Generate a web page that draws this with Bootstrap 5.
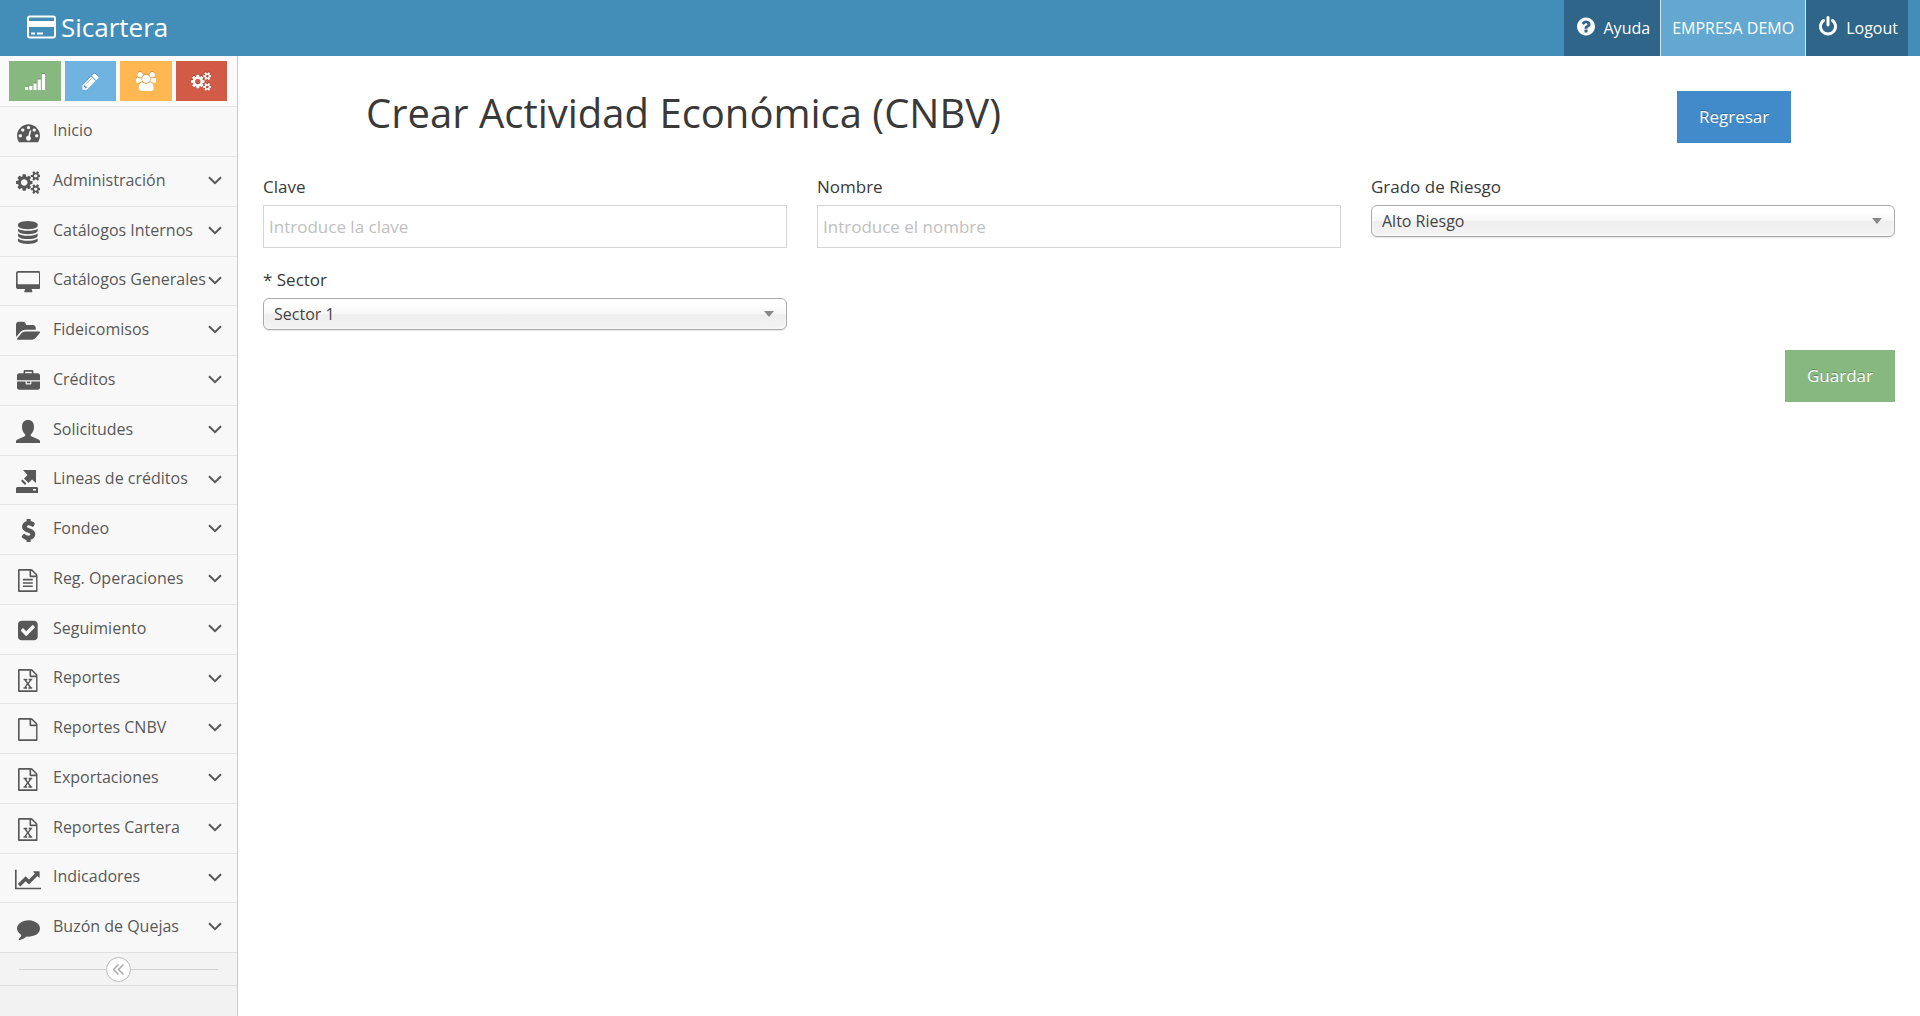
<!DOCTYPE html>
<html lang="es">
<head>
<meta charset="utf-8">
<meta name="viewport" content="width=device-width, initial-scale=1">
<title>Sicartera</title>
<link href="https://cdn.jsdelivr.net/npm/bootstrap@5.3.0/dist/css/bootstrap.min.css" rel="stylesheet">
<style>
body{font-family:"Open Sans","Noto Sans",sans-serif;font-size:16px;color:#393939;line-height:24px}
.ico{height:23px;width:auto;fill:currentColor;display:block}
.topbar{background:#438eb9;height:56px;color:#fff}
.brand-link{font-size:26px;gap:5px;padding:0 0 2px 27px}
.brand-link .ico{width:29px;height:24px}
.user-nav{margin-right:12px}
.user-nav a{color:#fff;padding:0 10px 0 13px;gap:9px;background:#2e6589}
.user-nav a.company{background:#62a8d1;border:solid #d5e5ef;border-width:0 1px;padding:0 11px}
.user-nav .ico{height:21px;margin-bottom:3px}
.sidebar{width:238px;background:#f2f2f2;border-right:1px solid #ccc}
.shortcuts{background:#fafafa;padding:5px 10px 5px 9px;gap:4px;height:50px}
.shortcuts button{flex:1 1 0;height:40px;border:0;color:#fff;padding:0}
.shortcuts .ico{height:19px;filter:drop-shadow(0 -1px 0 rgba(0,0,0,.2))}
.sc-green{background:#87b87f}
.sc-blue{background:#6fb3e0}
.sc-orange{background:#ffb752}
.sc-red{background:#d15b47}
.side-menu li{height:50px;background:#f8f8f8;border-top:1px solid #e5e5e5}
.side-menu li:nth-child(4n){height:49px}
.side-menu a{color:#585858;height:100%;padding:0 15px 0 9px}
.side-menu .slot{width:38px;flex:none;padding-top:2px}
.side-menu .ico{margin:0 auto}
.side-menu .label-txt{margin-left:6px;white-space:nowrap;flex:1 1 0;min-width:0;padding-bottom:4px}
.side-menu .chev{width:14px;height:9px;fill:none;stroke:currentColor;stroke-width:2;flex:none;margin-bottom:2px}
.collapse-row{height:34px;border:solid #e0e0e0;border-width:1px 0;background:#f3f3f3;padding:0 19px}
.collapse-row hr{flex:1;margin:0;border-color:#d0d0d0;opacity:1}
.collapse-row button{width:25px;height:25px;border:1px solid #bbb;background:#fff;color:#aaa;padding:0}
.main-area{padding:35px 25px 0}
.title-row{margin-bottom:32px}
.main-area h1{font-size:40px;line-height:44px;font-weight:400;margin:0 0 0 103px}
.btn-ace{height:52px;border:0;color:#fff;font-size:17px;padding:0 22px;text-shadow:0 -1px 0 rgba(0,0,0,.25)}
.btn-back{background:#428bca;margin-right:104px;width:114px}
.btn-save{background:#87b87f;width:110px}
.row{--bs-gutter-x:30px}
.form-line{margin-top:20px}
.field-label{font-size:17px;margin-bottom:6px;display:block}
.text-in{height:43px;border:1px solid #d5d5d5;width:100%;padding:0 5px;font-size:17px}
.text-in::placeholder{color:#c0c0c0;opacity:1}
.sel{position:relative}
.sel select{appearance:none;width:100%;height:32px;border:1px solid #aaa;border-radius:6px;padding:0 10px;font-size:16px;color:#444;background:linear-gradient(#fff 20%,#f6f6f6 50%,#eee 52%,#f4f4f4 100%);box-shadow:0 0 3px #fff inset,0 1px 1px rgba(0,0,0,.1)}
.sel::after{content:"";position:absolute;right:13px;top:13px;border:5px solid transparent;border-top:6px solid #888;border-bottom:0}
</style>
</head>
<body class="d-flex flex-column min-vh-100">
<svg class="d-none">
<symbol id="sheet" viewBox="128 0 1536 1792"><path d="M1596 380q28 28 48 76t20 88v1152q0 40-28 68t-68 28h-1344q-40 0-68-28t-28-68v-1600q0-40 28-68t68-28h896q40 0 88 20t76 48zm-444-244v376h376q-10-29-22-41l-313-313q-12-12-41-22zm384 1528v-1024h-416q-40 0-68-28t-28-68v-416h-768v1536h1280z"/></symbol>
<symbol id="excel" viewBox="128 0 1536 1792"><path d="M1596 380q28 28 48 76t20 88v1152q0 40-28 68t-68 28h-1344q-40 0-68-28t-28-68v-1600q0-40 28-68t68-28h896q40 0 88 20t76 48zm-444-244v376h376q-10-29-22-41l-313-313q-12-12-41-22zm384 1528v-1024h-416q-40 0-68-28t-28-68v-416h-768v1536h1280zm-979-234v106h281v-106h-75l103-161q5-7 10-16.5t7.5-13.5 3.5-4h2q1 4 5 10 2 4 4.5 7.5t6 8 6.5 8.5l107 161h-76v106h291v-106h-68l-192-273 195-282h67v-107h-279v107h74l-103 159q-4 7-10 16.5t-9 13.5l-2 3h-2q-1-4-5-10-6-11-17-23l-106-159h76v-107h-290v107h68l189 272-194 283h-68z"/></symbol>
<symbol id="cogs" viewBox="-64 0 1920 1792"><path d="M832 896q0-106-75-181t-181-75-181 75-75 181 75 181 181 75 181-75 75-181zm768 512q0-52-38-90t-90-38-90 38-38 90q0 53 37.5 90.5t90.5 37.5 90.5-37.5 37.5-90.5zm0-1024q0-52-38-90t-90-38-90 38-38 90q0 53 37.5 90.5t90.5 37.5 90.5-37.5 37.5-90.5zm-384 421v185q0 10-7 19.5t-16 10.5l-155 24q-11 35-32 76 34 48 90 115 7 11 7 20 0 12-7 19-23 30-82.5 89.5t-78.5 59.5q-11 0-21-7l-115-90q-37 19-77 31-11 108-23 155-7 24-30 24h-186q-11 0-20-7.5t-10-17.5l-23-153q-34-10-75-31l-118 89q-7 7-20 7-11 0-21-8-144-133-144-160 0-9 7-19 10-14 41-53t47-61q-23-44-35-82l-152-24q-10-1-17-9.5t-7-19.5v-185q0-10 7-19.5t16-10.5l155-24q11-35 32-76-34-48-90-115-7-11-7-20 0-12 7-20 22-30 82-89t79-59q11 0 21 7l115 90q34-18 77-32 11-108 23-154 7-24 30-24h186q11 0 20 7.5t10 17.5l23 153q34 10 75 31l118-89q8-7 20-7 11 0 21 8 144 133 144 160 0 8-7 19-12 16-42 54t-45 60q23 48 34 82l152 23q10 2 17 10.5t7 19.5zm640 533v140q0 16-149 31-12 27-30 52 51 113 51 138 0 4-4 7-122 71-124 71-8 0-46-47t-52-68q-20 2-30 2t-30-2q-14 21-52 68t-46 47q-2 0-124-71-4-3-4-7 0-25 51-138-18-25-30-52-149-15-149-31v-140q0-16 149-31 13-29 30-52-51-113-51-138 0-4 4-7 4-2 35-20t59-34 30-16q8 0 46 46.5t52 67.5q20-2 30-2t30 2q51-71 92-112l6-2q4 0 124 70 4 3 4 7 0 25-51 138 17 23 30 52 149 15 149 31zm0-1024v140q0 16-149 31-12 27-30 52 51 113 51 138 0 4-4 7-122 71-124 71-8 0-46-47t-52-68q-20 2-30 2t-30-2q-14 21-52 68t-46 47q-2 0-124-71-4-3-4-7 0-25 51-138-18-25-30-52-149-15-149-31v-140q0-16 149-31 13-29 30-52-51-113-51-138 0-4 4-7 4-2 35-20t59-34 30-16q8 0 46 46.5t52 67.5q20-2 30-2t30 2q51-71 92-112l6-2q4 0 124 70 4 3 4 7 0 25-51 138 17 23 30 52 149 15 149 31z"/></symbol>
<symbol id="down" viewBox="0 0 14 9"><path d="M1 1.2l6 6 6-6"/></symbol>
</svg>

<header class="topbar d-flex justify-content-between">
  <a href="#" class="brand-link d-flex align-items-center text-white text-decoration-none">
    <svg class="ico" viewBox="0 0 29 24"><path fill-rule="evenodd" d="M3 .5h23a3 3 0 0 1 3 3v17a3 3 0 0 1-3 3H3a3 3 0 0 1-3-3v-17a3 3 0 0 1 3-3zM2 3.500V6h25V3.500q0-1-1-1H3q-1 0-1 1zM2 12v8.500q0 1 1 1h23q1 0 1-1V12zM4 17.500h4v2H4zM10 17.500h6v2h-6z"/></svg>
    <span>Sicartera</span>
  </a>
  <nav class="user-nav d-flex">
    <a href="#" class="d-flex align-items-center text-decoration-none"><svg class="ico" viewBox="128 0 1536 1792"><path d="M1024 1376v-192q0-14-9-23t-23-9h-192q-14 0-23 9t-9 23v192q0 14 9 23t23 9h192q14 0 23-9t9-23zm256-672q0-88-55.500-163t-138.500-116-170-41q-243 0-371 213-15 24 8 42l132 100q7 6 19 6 16 0 25-12 53-68 86-92 34-24 86-24 48 0 85.500 26t37.500 59q0 38-20 61t-68 45q-63 28-115.500 86.500t-52.500 125.500v36q0 14 9 23t23 9h192q14 0 23-9t9-23q0-19 21.500-49.500t54.500-49.500q32-18 49-28.500t46-35 44.500-48 28-60.500 12.500-81zm384 192q0 209-103 385.500t-279.500 279.500-385.500 103-385.500-103-279.500-279.500-103-385.500 103-385.500 279.500-279.500 385.500-103 385.500 103 279.500 279.500 103 385.500z"/></svg>Ayuda</a>
    <a href="#" class="company d-flex align-items-center text-decoration-none">EMPRESA DEMO</a>
    <a href="#" class="d-flex align-items-center text-decoration-none"><svg class="ico" viewBox="128 0 1536 1792"><path d="M1664 896q0 156-61 298t-164 245-245 164-298 61-298-61-245-164-164-245-61-298q0-182 80.500-343t226.500-270q43-32 95.500-25t83.500 50q32 42 24.500 94.500t-49.500 84.500q-98 74-151.500 181t-53.500 228q0 104 40.500 198.500t109.500 163.500 163.500 109.500 198.500 40.500 198.500-40.500 163.500-109.500 109.500-163.500 40.500-198.500q0-121-53.500-228t-151.500-181q-42-32-49.500-84.500t24.500-94.500q31-43 84-50t95 25q146 109 226.500 270t80.500 343zm-640-768v640q0 52-38 90t-90 38-90-38-38-90v-640q0-52 38-90t90-38 90 38 38 90z"/></svg>Logout</a>
  </nav>
</header>

<div class="d-flex flex-grow-1">
  <aside class="sidebar flex-shrink-0">
    <div class="shortcuts d-flex">
      <button type="button" aria-label="Estadísticas" class="sc-green d-flex align-items-center justify-content-center"><svg class="ico" viewBox="0 0 19 18"><path d="M0 14h3v3H0zM4 13h3v4H4zM8 11h3v6H8zM12 7h3v10h-3zM16 2h3v15h-3z"/></svg></button>
      <button type="button" aria-label="Editar" class="sc-blue d-flex align-items-center justify-content-center"><svg class="ico" viewBox="0 0 1792 1792"><path d="M491 1536l91-91-235-235-91 91v107h128v128h107zm523-928q0-22-22-22-10 0-17 7l-542 542q-7 7-7 17 0 22 22 22 10 0 17-7l542-542q7-7 7-17zm-54-192l416 416-832 832h-416v-416zm683 96q0 53-37 90l-166 166-416-416 166-165q36-38 90-38 53 0 91 38l235 234q37 39 37 91z"/></svg></button>
      <button type="button" aria-label="Usuarios" class="sc-orange d-flex align-items-center justify-content-center"><svg class="ico" viewBox="-64 0 1920 1792"><path d="M529 896q-162 5-265 128h-134q-82 0-138-40.500t-56-118.500q0-353 124-353 6 0 43.500 21t97.500 42.500 119 21.500q67 0 133-23-5 37-5 66 0 139 81 256zm1071 637q0 120-73 189.500t-194 69.500h-874q-121 0-194-69.500t-73-189.500q0-53 3.500-103.500t14-109 26.500-108.500 43-97.500 62-81 85.500-53.500 111.500-20q10 0 43 21.500t73 48 107 48 135 21.500 135-21.500 107-48 73-48 43-21.500q61 0 111.500 20t85.500 53.500 62 81 43 97.500 26.500 108.500 14 109 3.500 103.500zm-1024-1277q0 106-75 181t-181 75-181-75-75-181 75-181 181-75 181 75 75 181zm704 384q0 159-112.500 271.500t-271.500 112.500-271.500-112.500-112.500-271.500 112.500-271.500 271.500-112.500 271.500 112.500 112.500 271.500zm576 225q0 78-56 118.500t-138 40.500h-134q-103-123-265-128 81-117 81-256 0-29-5-66 66 23 133 23 59 0 119-21.500t97.500-42.500 43.500-21q124 0 124 353zm-128-609q0 106-75 181t-181 75-181-75-75-181 75-181 181-75 181 75 75 181z"/></svg></button>
      <button type="button" aria-label="Configuración" class="sc-red d-flex align-items-center justify-content-center"><svg class="ico" viewBox="-64 0 1920 1792"><use href="#cogs" x="-64" width="1920" height="1792"/></svg></button>
    </div>
    <ul class="side-menu list-unstyled m-0">
      <li><a href="#" class="d-flex align-items-center text-decoration-none"><span class="slot"><svg class="ico" viewBox="0 0 1792 1792"><path d="M384 1152q0-53-37.500-90.500t-90.500-37.500-90.500 37.500-37.500 90.500 37.500 90.500 90.500 37.500 90.500-37.500 37.500-90.500zm192-448q0-53-37.500-90.500t-90.500-37.500-90.500 37.500-37.500 90.500 37.500 90.500 90.500 37.500 90.500-37.500 37.500-90.500zm428 481l101-382q6-26-7.500-48.500t-38.500-29.500-48 6.500-30 39.500l-101 382q-60 5-107 43.500t-63 98.500q-20 77 20 146t117 89 146-20 89-117q16-60-6-117t-72-91zm660-33q0-53-37.500-90.500t-90.500-37.500-90.500 37.500-37.500 90.500 37.500 90.500 90.500 37.500 90.500-37.500 37.500-90.500zm-640-640q0-53-37.500-90.500t-90.500-37.500-90.500 37.500-37.500 90.500 37.500 90.500 90.500 37.500 90.500-37.500 37.500-90.500zm448 192q0-53-37.500-90.500t-90.500-37.500-90.500 37.500-37.500 90.500 37.500 90.500 90.500 37.500 90.500-37.500 37.500-90.500zm320 448q0 261-141 483-19 29-54 29h-1402q-35 0-54-29-141-221-141-483 0-182 71-348t191-286 286-191 348-71 348 71 286 191 191 286 71 348z"/></svg></span><span class="label-txt">Inicio</span></a></li>
      <li><a href="#" class="d-flex align-items-center text-decoration-none"><span class="slot"><svg class="ico" viewBox="-64 0 1920 1792"><use href="#cogs" x="-64" width="1920" height="1792"/></svg></span><span class="label-txt">Administración</span><svg class="chev"><use href="#down"/></svg></a></li>
      <li><a href="#" class="d-flex align-items-center text-decoration-none"><span class="slot"><svg class="ico" viewBox="128 0 1536 1792"><path d="M896 768q237 0 443-43t325-127v170q0 69-103 128t-280 93.500-385 34.500-385-34.500-280-93.500-103-128v-170q119 84 325 127t443 43zm0 768q237 0 443-43t325-127v170q0 69-103 128t-280 93.500-385 34.500-385-34.500-280-93.500-103-128v-170q119 84 325 127t443 43zm0-384q237 0 443-43t325-127v170q0 69-103 128t-280 93.500-385 34.500-385-34.500-280-93.500-103-128v-170q119 84 325 127t443 43zm0-1152q208 0 385 34.500t280 93.500 103 128v128q0 69-103 128t-280 93.500-385 34.500-385-34.500-280-93.500-103-128v-128q0-69 103-128t280-93.500 385-34.500z"/></svg></span><span class="label-txt">Catálogos Internos</span><svg class="chev"><use href="#down"/></svg></a></li>
      <li><a href="#" class="d-flex align-items-center text-decoration-none"><span class="slot"><svg class="ico" viewBox="-64 0 1920 1792"><path d="M1728 992v-832q0-13-9.500-22.500t-22.500-9.500h-1600q-13 0-22.500 9.500t-9.500 22.500v832q0 13 9.500 22.500t22.500 9.500h1600q13 0 22.500-9.500t9.500-22.500zm128-832v1088q0 66-47 113t-113 47h-544q0 37 16 77.500t32 71 16 43.500q0 26-19 45t-45 19h-512q-26 0-45-19t-19-45q0-14 16-44t32-70 16-78h-544q-66 0-113-47t-47-113v-1088q0-66 47-113t113-47h1600q66 0 113 47t47 113z"/></svg></span><span class="label-txt">Catálogos Generales</span><svg class="chev"><use href="#down"/></svg></a></li>
      <li><a href="#" class="d-flex align-items-center text-decoration-none"><span class="slot"><svg class="ico" viewBox="64 0 1920 1792"><path d="M1943 952q0 31-31 66l-336 396q-43 51-120.500 86.500t-143.500 35.500h-1088q-34 0-60.500-13t-26.500-43q0-31 31-66l336-396q43-51 120.500-86.500t143.500-35.500h1088q34 0 60.500 13t26.500 43zm-343-344v160h-832q-94 0-197 47.500t-164 119.500l-337 396-5 6q0-4-.5-12.500t-.5-12.500v-960q0-92 66-158t158-66h320q92 0 158 66t66 158v32h544q92 0 158 66t66 158z"/></svg></span><span class="label-txt">Fideicomisos</span><svg class="chev"><use href="#down"/></svg></a></li>
      <li><a href="#" class="d-flex align-items-center text-decoration-none"><span class="slot"><svg class="ico" viewBox="0 0 1792 1792"><path d="M640 256h512v-128h-512v128zm1152 640v480q0 66-47 113t-113 47h-1472q-66 0-113-47t-47-113v-480h672v160q0 26 19 45t45 19h320q26 0 45-19t19-45v-160h672zm-768 0v128h-256v-128h256zm768-480v384h-1792v-384q0-66 47-113t113-47h352v-160q0-40 28-68t68-28h576q40 0 68 28t28 68v160h352q66 0 113 47t47 113z"/></svg></span><span class="label-txt">Créditos</span><svg class="chev"><use href="#down"/></svg></a></li>
      <li><a href="#" class="d-flex align-items-center text-decoration-none"><span class="slot"><svg class="ico" viewBox="0 0 24 23"><path d="M12 0C8.200 0 6 2.600 6 7c0 3 1.200 5.600 2.800 7 .9.800.7 1.900-.6 2.500L2 19.200C.7 19.800 0 20.400 0 21.500V23h24v-1.500c0-1.100-.7-1.700-2-2.300l-6.200-2.700c-1.300-.6-1.500-1.700-.6-2.500C16.800 12.600 18 10 18 7c0-4.400-2.200-7-6-7z"/></svg></span><span class="label-txt">Solicitudes</span><svg class="chev"><use href="#down"/></svg></a></li>
      <li><a href="#" class="d-flex align-items-center text-decoration-none"><span class="slot"><svg class="ico" viewBox="0 0 24 23"><path fill-rule="evenodd" d="M7 0h13v13l-4-3.500-3.500 3.500-4.500-4.500L11.500 5zM6.500 9.500l4 4L9 15l-4-4zM1 17h20l1 1v5H0v-5zM17 19v1.500h3V19z"/></svg></span><span class="label-txt">Lineas de créditos</span><svg class="chev"><use href="#down"/></svg></a></li>
      <li><a href="#" class="d-flex align-items-center text-decoration-none"><span class="slot"><svg class="ico" viewBox="0 0 1792 1792"><path stroke="currentColor" stroke-width="120" d="M1362 1185q0 153-99.500 263.500t-258.500 136.500v175q0 14-9 23t-23 9h-135q-13 0-22.500-9.500t-9.500-22.500v-175q-66-9-127.500-31t-101.500-44.500-74-48-46.500-37.500-17.500-18q-17-21-2-41l103-135q7-10 23-12 15-2 24 9l2 2q113 99 243 125 37 8 74 8 81 0 142.500-43t61.500-122q0-28-15-53t-33.500-42-58.500-37.500-66-32-80-32.500q-39-16-61.500-25t-61.500-26.500-62.500-31-56.500-35.500-53.500-42.500-43.500-49-35.500-58-21-66.500-8.500-78q0-138 98-242t255-134v-180q0-13 9.500-22.500t22.500-9.500h135q14 0 23 9t9 23v176q57 6 110.500 23t87 33.500 63.500 37.500 39 29 15 14q17 18 5 38l-81 146q-8 15-23 16-14 3-27-7-3-3-14.500-12t-39-26.500-58.500-32-74.500-26-85.500-11.500q-95 0-155 43t-60 111q0 26 8.500 48t29.500 41.500 39.500 33 56 31 60.500 27 70 27.500q53 20 81 31.500t76 35 75.500 42.500 62 50 53 63.500 31.500 76.500 13 94z"/></svg></span><span class="label-txt">Fondeo</span><svg class="chev"><use href="#down"/></svg></a></li>
      <li><a href="#" class="d-flex align-items-center text-decoration-none"><span class="slot"><svg class="ico" viewBox="128 0 1536 1792"><use href="#sheet" x="128" width="1536" height="1792"/><path d="M512 768h768v128H512zM512 1024h768v128H512zM512 1280h768v128H512z"/></svg></span><span class="label-txt">Reg. Operaciones</span><svg class="chev"><use href="#down"/></svg></a></li>
      <li><a href="#" class="d-flex align-items-center text-decoration-none"><span class="slot"><svg class="ico" viewBox="128 0 1536 1792"><path d="M813 1299l614-614q19-19 19-45t-19-45l-102-102q-19-19-45-19t-45 19l-467 467-211-211q-19-19-45-19t-45 19l-102 102q-19 19-19 45t19 45l358 358q19 19 45 19t45-19zm851-883v960q0 119-84.500 203.500t-203.500 84.500h-960q-119 0-203.500-84.500t-84.500-203.500v-960q0-119 84.500-203.500t203.500-84.500h960q119 0 203.500 84.500t84.500 203.500z"/></svg></span><span class="label-txt">Seguimiento</span><svg class="chev"><use href="#down"/></svg></a></li>
      <li><a href="#" class="d-flex align-items-center text-decoration-none"><span class="slot"><svg class="ico" viewBox="0 0 1536 1792"><use href="#excel" width="1536" height="1792"/></svg></span><span class="label-txt">Reportes</span><svg class="chev"><use href="#down"/></svg></a></li>
      <li><a href="#" class="d-flex align-items-center text-decoration-none"><span class="slot"><svg class="ico" viewBox="0 0 1536 1792"><use href="#sheet" width="1536" height="1792"/></svg></span><span class="label-txt">Reportes CNBV</span><svg class="chev"><use href="#down"/></svg></a></li>
      <li><a href="#" class="d-flex align-items-center text-decoration-none"><span class="slot"><svg class="ico" viewBox="0 0 1536 1792"><use href="#excel" width="1536" height="1792"/></svg></span><span class="label-txt">Exportaciones</span><svg class="chev"><use href="#down"/></svg></a></li>
      <li><a href="#" class="d-flex align-items-center text-decoration-none"><span class="slot"><svg class="ico" viewBox="0 0 1536 1792"><use href="#excel" width="1536" height="1792"/></svg></span><span class="label-txt">Reportes Cartera</span><svg class="chev"><use href="#down"/></svg></a></li>
      <li><a href="#" class="d-flex align-items-center text-decoration-none"><span class="slot"><svg class="ico" viewBox="0 0 2048 1792"><path d="M2048 1536v128h-2048v-1536h128v1408h1920zm-128-1248v435q0 21-19.500 29.500t-35.500-7.500l-121-121-633 633q-10 10-23 10t-23-10l-233-233-416 416-192-192 585-585q10-10 23-10t23 10l233 233 464-464-121-121q-16-16-7.500-35.500t29.500-19.500h435q14 0 23 9t9 23z"/></svg></span><span class="label-txt">Indicadores</span><svg class="chev"><use href="#down"/></svg></a></li>
      <li><a href="#" class="d-flex align-items-center text-decoration-none"><span class="slot"><svg class="ico" viewBox="0 0 1792 1792"><path d="M1792 896q0 174-120 321.500t-326 233-450 85.500q-70 0-145-8-198 175-460 242-49 14-114 22-17 2-30.500-9t-17.500-29v-1q-3-4-.5-12t2-10 4.500-9.500l6-9 7-8.500 8-9q7-8 31-34.500t34.500-38 31-39.500 32.500-51 27-59 26-76q-157-89-247.500-220t-90.500-281q0-130 71-248.500t191-204.500 286-136.500 348-50.500q244 0 450 85.500t326 233 120 321.500z"/></svg></span><span class="label-txt">Buzón de Quejas</span><svg class="chev"><use href="#down"/></svg></a></li>
    </ul>
    <div class="collapse-row d-flex align-items-center">
      <hr><button type="button" aria-label="Contraer menú" class="rounded-circle d-flex align-items-center justify-content-center"><svg width="11" height="11" viewBox="0 0 11 11" fill="none" stroke="currentColor" stroke-width="1.500"><path d="M5.500.5l-5 5 5 5M10.500.5l-5 5 5 5"/></svg></button><hr>
    </div>
  </aside>

  <main class="main-area flex-grow-1">
    <div class="title-row d-flex justify-content-between align-items-start">
      <h1>Crear Actividad Económica (CNBV)</h1>
      <button type="button" class="btn-ace btn-back">Regresar</button>
    </div>
    <form>
      <div class="row">
        <div class="col-4"><label class="field-label" for="clave">Clave</label><input class="text-in" id="clave" type="text" placeholder="Introduce la clave"></div>
        <div class="col-4"><label class="field-label" for="nombre">Nombre</label><input class="text-in" id="nombre" type="text" placeholder="Introduce el nombre"></div>
        <div class="col-4"><label class="field-label" for="riesgo">Grado de Riesgo</label><div class="sel"><select id="riesgo"><option>Alto Riesgo</option></select></div></div>
      </div>
      <div class="row form-line">
        <div class="col-4"><label class="field-label" for="sector">* Sector</label><div class="sel"><select id="sector"><option>Sector 1</option></select></div></div>
      </div>
      <div class="form-line d-flex justify-content-end"><button type="submit" class="btn-ace btn-save">Guardar</button></div>
    </form>
  </main>
</div>
<script src="https://cdn.jsdelivr.net/npm/bootstrap@5.3.0/dist/js/bootstrap.bundle.min.js"></script>
</body>
</html>
